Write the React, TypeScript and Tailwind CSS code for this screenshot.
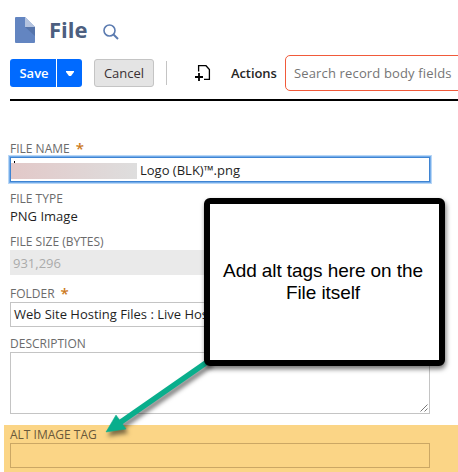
import type { ReactNode } from "react";

function FieldLabel({ children, required }: { children: ReactNode; required?: boolean }) {
  return (
    <div className="flex h-4 items-center whitespace-nowrap text-[12px] leading-4 text-[#6b6b6b]">
      <span>{children}</span>
      {required && <span className="-mt-[2px] ml-[6px] text-[15px] font-semibold leading-4 text-[#cc7a1c]">*</span>}
    </div>
  );
}

function FileIcon() {
  return (
    <svg className="h-[26px] w-5" viewBox="0 0 20 26">
      <path d="M1 0h9l10 10v15a1 1 0 0 1-1 1H1a1 1 0 0 1-1-1V1a1 1 0 0 1 1-1z" fill="#6385c1" />
      <path d="M10 0l10 10H10z" fill="#b4c3df" />
      <path d="M10 10h10v9z" fill="#5574ab" />
    </svg>
  );
}

function Toolbar() {
  return (
    <div className="flex h-9 items-center text-[13px]">
      <div className="flex h-7 w-[72px] shrink-0 overflow-hidden rounded-[3px] bg-[#006aff] text-white">
        <button className="w-[46px] pl-[2px] pt-px font-semibold">Save</button>
        <button className="flex w-[26px] items-center justify-center border-l border-white">
          <svg className="h-[5px] w-2" viewBox="0 0 8 5">
            <path d="M0 0h8v1L5 5H3L0 1z" fill="#fff" />
          </svg>
        </button>
      </div>
      <button className="ml-3 h-7 w-[60px] shrink-0 rounded-[3px] border border-[#c4c4c4] bg-[#e4e4e4] pt-px font-medium text-[#3a3033]">
        Cancel
      </button>
      <div className="ml-3 h-6 w-px shrink-0 bg-[#c4c4c4]" />
      <svg className="ml-7 h-4 w-4 shrink-0" viewBox="0 0 16 16" fill="none" stroke="#000">
        <path d="M3.6 6.5V0.7H11L14.4 4.5V14.4H9" strokeWidth="1.3" />
        <path d="M0 12h8M4 8v8" strokeWidth="1.8" />
      </svg>
      <span className="ml-5 w-[54px] shrink-0 pt-px font-semibold tracking-[-0.1px] text-[#262626]">Actions</span>
      <div className="flex h-9 w-[240px] shrink-0 items-center rounded-[5px] border border-[#f15a3a] pl-2 pt-px text-[#757575]">
        <span className="tracking-[0.15px]">Search record body fields</span>
      </div>
    </div>
  );
}

function Callout() {
  return (
    <>
      <svg className="absolute left-0 top-[350px] h-[100px] w-[230px] drop-shadow-[2px_4px_2px_rgba(0,0,0,0.5)]" viewBox="0 350 230 100">
        <path d="M210 360L118 424" stroke="#09ae8c" strokeWidth="5.5" />
        <path d="M106 432l10-17 10 14z" fill="#09ae8c" stroke="#09ae8c" strokeWidth="0.5" />
      </svg>
      <div className="absolute left-[204px] top-[198px] flex h-[168px] w-[241px] items-center justify-center rounded-[6px] border-[6px] border-black bg-white pb-px pr-[3px] text-center font-['Liberation_Sans',sans-serif] text-[19px] leading-[22px] tracking-[-0.08px] text-black shadow-[1px_3px_5px_rgba(0,0,0,0.55)]">
        <p className="whitespace-nowrap">
          Add alt tags here on the
          <br />
          File itself
        </p>
      </div>
    </>
  );
}

export default function App() {
  return (
    <div className="relative h-[472px] w-[458px] overflow-hidden bg-white font-['Open_Sans',sans-serif] text-[13px] text-[#1f1f1f]">
      <header className="pl-[10px]">
        <div className="flex h-[55px] items-center pl-[5px] pt-[5px]">
          <FileIcon />
          <h1 className="-mt-[2px] ml-[14px] text-[22px] font-bold leading-7 text-[#4d5f80]">File</h1>
          <svg className="ml-[15px] mt-[4px] h-4 w-4" viewBox="0 0 16 16" fill="none" stroke="#5b7bb0">
            <circle cx="6.5" cy="6.5" r="5.5" strokeWidth="1.6" />
            <path d="M10.5 10.5l4.5 4.5" strokeWidth="2" />
          </svg>
        </div>
        <Toolbar />
        <div className="mt-2 h-[2px] bg-black" />
      </header>

      <main className="pt-10">
        <div className="w-[430px] pl-[10px]">
          <FieldLabel required>FILE NAME</FieldLabel>
          <div className="flex h-[25px] items-center border border-[#3f84d2] shadow-[0_0_0_1px_#75adea,0_0_0_2px_#b9d7f6]">
            <span className="relative mt-[3px] h-4 w-[126px] bg-linear-to-r from-[#e2c8c8] to-[#dedede]">
              <span className="absolute -top-[2px] left-[3px] h-[2px] w-px bg-black" />
            </span>
            <span className="ml-[3px] pt-[2px]">Logo (BLK)™.png</span>
          </div>

          <div className="mt-[9px] h-[43px]">
            <FieldLabel>FILE TYPE</FieldLabel>
            <div className="leading-[19px]">PNG Image</div>
          </div>

          <FieldLabel>FILE SIZE (BYTES)</FieldLabel>
          <div className="flex h-[25px] items-center bg-[#eaeaea] pl-[3px] pt-[2px] text-[#ababab]">931,296</div>

          <div className="mt-[11px]">
            <FieldLabel required>FOLDER</FieldLabel>
            <div className="flex h-[25px] items-center whitespace-nowrap border border-[#c4c4c4] pl-[3px] pt-px">
              Web Site Hosting Files : Live Hosting Files
            </div>
          </div>

          <div className="mt-[9px]">
            <FieldLabel>DESCRIPTION</FieldLabel>
            <div className="flex h-[62px] items-end justify-end border border-[#c4c4c4] p-px">
              <svg className="h-2 w-2" viewBox="0 0 8 8" stroke="#555" strokeWidth="0.8">
                <path d="M0.5 7.5l7-7M4.5 7.5l3-3" />
              </svg>
            </div>
          </div>
        </div>

        <div className="ml-1 mt-[11px] h-[47px] bg-[#fbd586] pl-[6px] pt-[2px]">
          <div className="text-[12px] leading-4 text-[#6a593a]">ALT IMAGE TAG</div>
          <div className="h-[25px] w-[420px] border border-[#cba764]" />
        </div>
      </main>

      <Callout />
    </div>
  );
}
